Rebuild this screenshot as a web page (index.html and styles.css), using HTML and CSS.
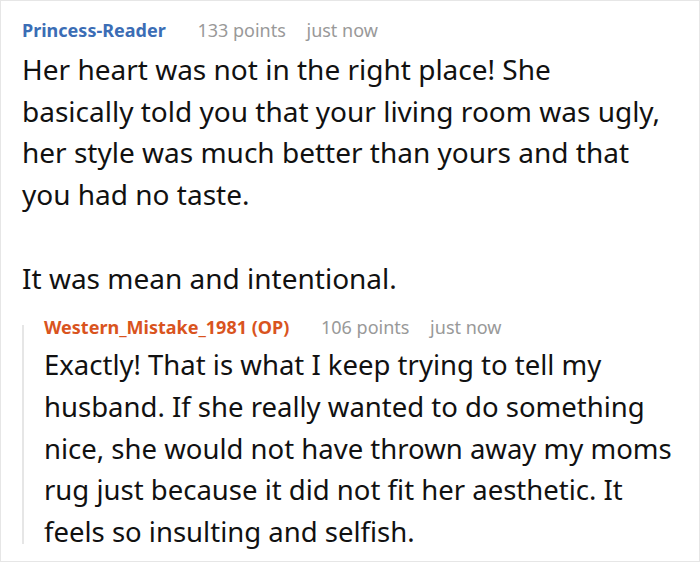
FILE: index.html
```html
<!DOCTYPE html>
<html>
<head>
<meta charset="utf-8">
<link rel="stylesheet" href="styles.css">
</head>
<body>
<div class="card">
  <div class="head">
    <span class="name">Princess-Reader</span>
    <span class="points">133 points</span>
    <span class="time">just now</span>
  </div>
  <div class="text main-text">Her heart was not in the right place! She basically told you that your living room was ugly, her style was much better than yours and that you had no taste.<br><br>It was mean and intentional.</div>
  <div class="reply">
    <div class="head reply-head">
      <span class="name op">Western_Mistake_1981 (OP)</span>
      <span class="points">106 points</span>
      <span class="time">just now</span>
    </div>
    <div class="text reply-text">Exactly! That is what I keep trying to tell my husband. If she really wanted to do something nice, she would not have thrown away my moms rug just because it did not fit her aesthetic. It feels so insulting and selfish.</div>
  </div>
</div>
</body>
</html>
```
FILE: styles.css
```css
html, body {
  margin: 0;
  padding: 0;
  background: #fff;
}
.card {
  width: 700px;
  height: 562px;
  box-sizing: border-box;
  border: 1px solid #e6e6e6;
  padding: 17px 8px 0 21px;
  overflow: hidden;
  font-family: "Noto Sans", sans-serif;
  color: #111;
}
.head {
  font-size: 18px;
  line-height: 24px;
  white-space: nowrap;
}
.name {
  font-weight: 700;
  color: #3b6db5;
  margin-right: 27px;
}
.name.op {
  color: #d9541e;
}
.points, .time {
  color: #999;
}
.points {
  margin-right: 16px;
}
.text {
  font-size: 28px;
  line-height: 41.7px;
  margin-top: 7px;
}
.main-text {
  max-width: 641px;
}
.reply {
  display: flex;
  flex-direction: column;
  margin-top: 26px;
  border-left: 2px solid #e6e6e6;
  padding-left: 20px;
}
.reply-head {
  margin-top: -10px;
}
.reply-text {
  font-size: 27.5px;
  max-width: 638px;
  margin-top: 5px;
  margin-bottom: -9px;
}
```
